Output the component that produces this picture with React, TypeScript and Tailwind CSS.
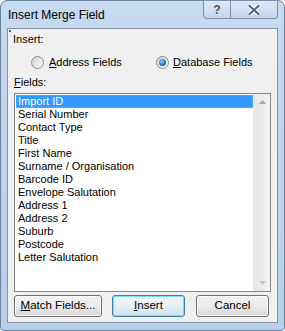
import React from "react";

const fields = [
  "Import ID",
  "Serial Number",
  "Contact Type",
  "Title",
  "First Name",
  "Surname / Organisation",
  "Barcode ID",
  "Envelope Salutation",
  "Address 1",
  "Address 2",
  "Suburb",
  "Postcode",
  "Letter Salutation",
];

function Radio({ checked }: { checked?: boolean }) {
  return (
    <span className="relative inline-flex w-[13px] h-[13px] rounded-full border border-[#8e8f8f] bg-gradient-to-br from-[#d0d0d0] to-[#fcfcfc] items-center justify-center">
      {checked && (
        <span className="w-[7px] h-[7px] rounded-full bg-[radial-gradient(circle_at_40%_35%,#8ad4ff,#1e6fb4_60%,#0b3f7a)]" />
      )}
    </span>
  );
}

function Btn({ children, def }: { children: React.ReactNode; def?: boolean }) {
  return (
    <div
      className={
        "h-[22px] flex items-center justify-center rounded-[3px] border text-[11.5px] text-black " +
        (def
          ? "border-[#3c7fb1] shadow-[inset_0_0_0_1px_#7ddcf9] bg-gradient-to-b from-[#eef6fb] via-[#e6eff6] to-[#cfe3f0]"
          : "border-[#707070] shadow-[inset_0_0_0_1px_#fcfcfc] bg-gradient-to-b from-[#f2f2f2] via-[#ebebeb] to-[#d6d6d6]")
      }
    >
      {children}
    </div>
  );
}

export default function App() {
  return (
    <div
      className="w-[285px] h-[331px] flex flex-col rounded-t-[7px] rounded-b-[4px] border border-[#6b8099] bg-gradient-to-b from-[#c6daf0] to-[#b8cfe9]"
      style={{ fontFamily: '"Liberation Sans", Arial, sans-serif' }}
    >
      <div className="h-[27px] flex items-start">
        <div className="pl-[7px] pt-[7px] text-[12px] leading-[14px] text-black">
          Insert Merge Field
        </div>
        <div className="ml-auto mr-[6px] -mt-px flex h-[19px]">
          <div className="w-[28px] h-full flex items-center justify-center border border-[#7890ac] rounded-bl-[4px] bg-gradient-to-b from-[#dde8f5] to-[#c3d6ec] text-[12px] font-bold text-[#3b4a5e] [text-shadow:0_0_1px_white]">
            ?
          </div>
          <div className="w-[47px] h-full flex items-center justify-center border border-l-0 border-[#7890ac] rounded-br-[4px] bg-gradient-to-b from-[#dde8f5] to-[#c3d6ec]">
            <svg width="12" height="10" viewBox="0 0 12 10">
              <path d="M1.5 1 L10.5 9 M10.5 1 L1.5 9" stroke="#ffffff" strokeWidth="4" strokeLinecap="square" />
              <path d="M1.5 1 L10.5 9 M10.5 1 L1.5 9" stroke="#4f5f74" strokeWidth="2" strokeLinecap="square" />
            </svg>
          </div>
        </div>
      </div>
      <div className="mx-[6px] mb-[7px] flex-1 border border-[#8593a6] bg-[#f0f0f0] flex flex-col relative text-[11px]">
        <span className="absolute left-px top-px w-[2px] h-[2px] bg-[#606060]" />
        <div className="pl-[5px] pt-[3px] leading-[15px]">Insert:</div>
        <div className="flex items-center h-[15px] mt-[8px]">
          <div className="ml-[23px] w-[125px] flex items-center">
            <Radio />
            <span className="ml-[5px]"><u>A</u>ddress Fields</span>
          </div>
          <div className="flex items-center">
            <Radio checked />
            <span className="ml-[4px]"><u>D</u>atabase Fields</span>
          </div>
        </div>
        <div className="pl-[6px] mt-[5px] leading-[15px]"><u>F</u>ields:</div>
        <div className="ml-[6px] mt-[3px] w-[257px] h-[199px] border border-[#828790] bg-white flex">
          <div className="flex-1 pt-px pl-px leading-[13px]">
            {fields.map((f, i) => (
              <div
                key={f}
                className={
                  "h-[13px] pl-[2px] whitespace-nowrap " +
                  (i === 0 ? "bg-[#3399ff] text-white outline outline-1 outline-dotted outline-[#e8914a] -outline-offset-1" : "text-black")
                }
              >
                {f}
              </div>
            ))}
          </div>
          <div className="w-[17px] h-full bg-gradient-to-r from-[#e6e6e6] to-[#f2f2f2] border-l border-[#e8e8e8] flex flex-col items-center justify-between py-[6px]">
            <svg width="7" height="4" viewBox="0 0 7 4"><path d="M3.5 0 L7 4 L0 4 Z" fill="#a4a4a4" /></svg>
            <svg width="7" height="4" viewBox="0 0 7 4"><path d="M0 0 L7 0 L3.5 4 Z" fill="#c4c4c4" /></svg>
          </div>
        </div>
        <div className="mt-[3px] ml-[6px] flex gap-[10px]">
          <div className="w-[88px]"><Btn><u>M</u>atch Fields...</Btn></div>
          <div className="w-[73px]"><Btn def><u>I</u>nsert</Btn></div>
          <div className="w-[73px] ml-px"><Btn>Cancel</Btn></div>
        </div>
      </div>
    </div>
  );
}
